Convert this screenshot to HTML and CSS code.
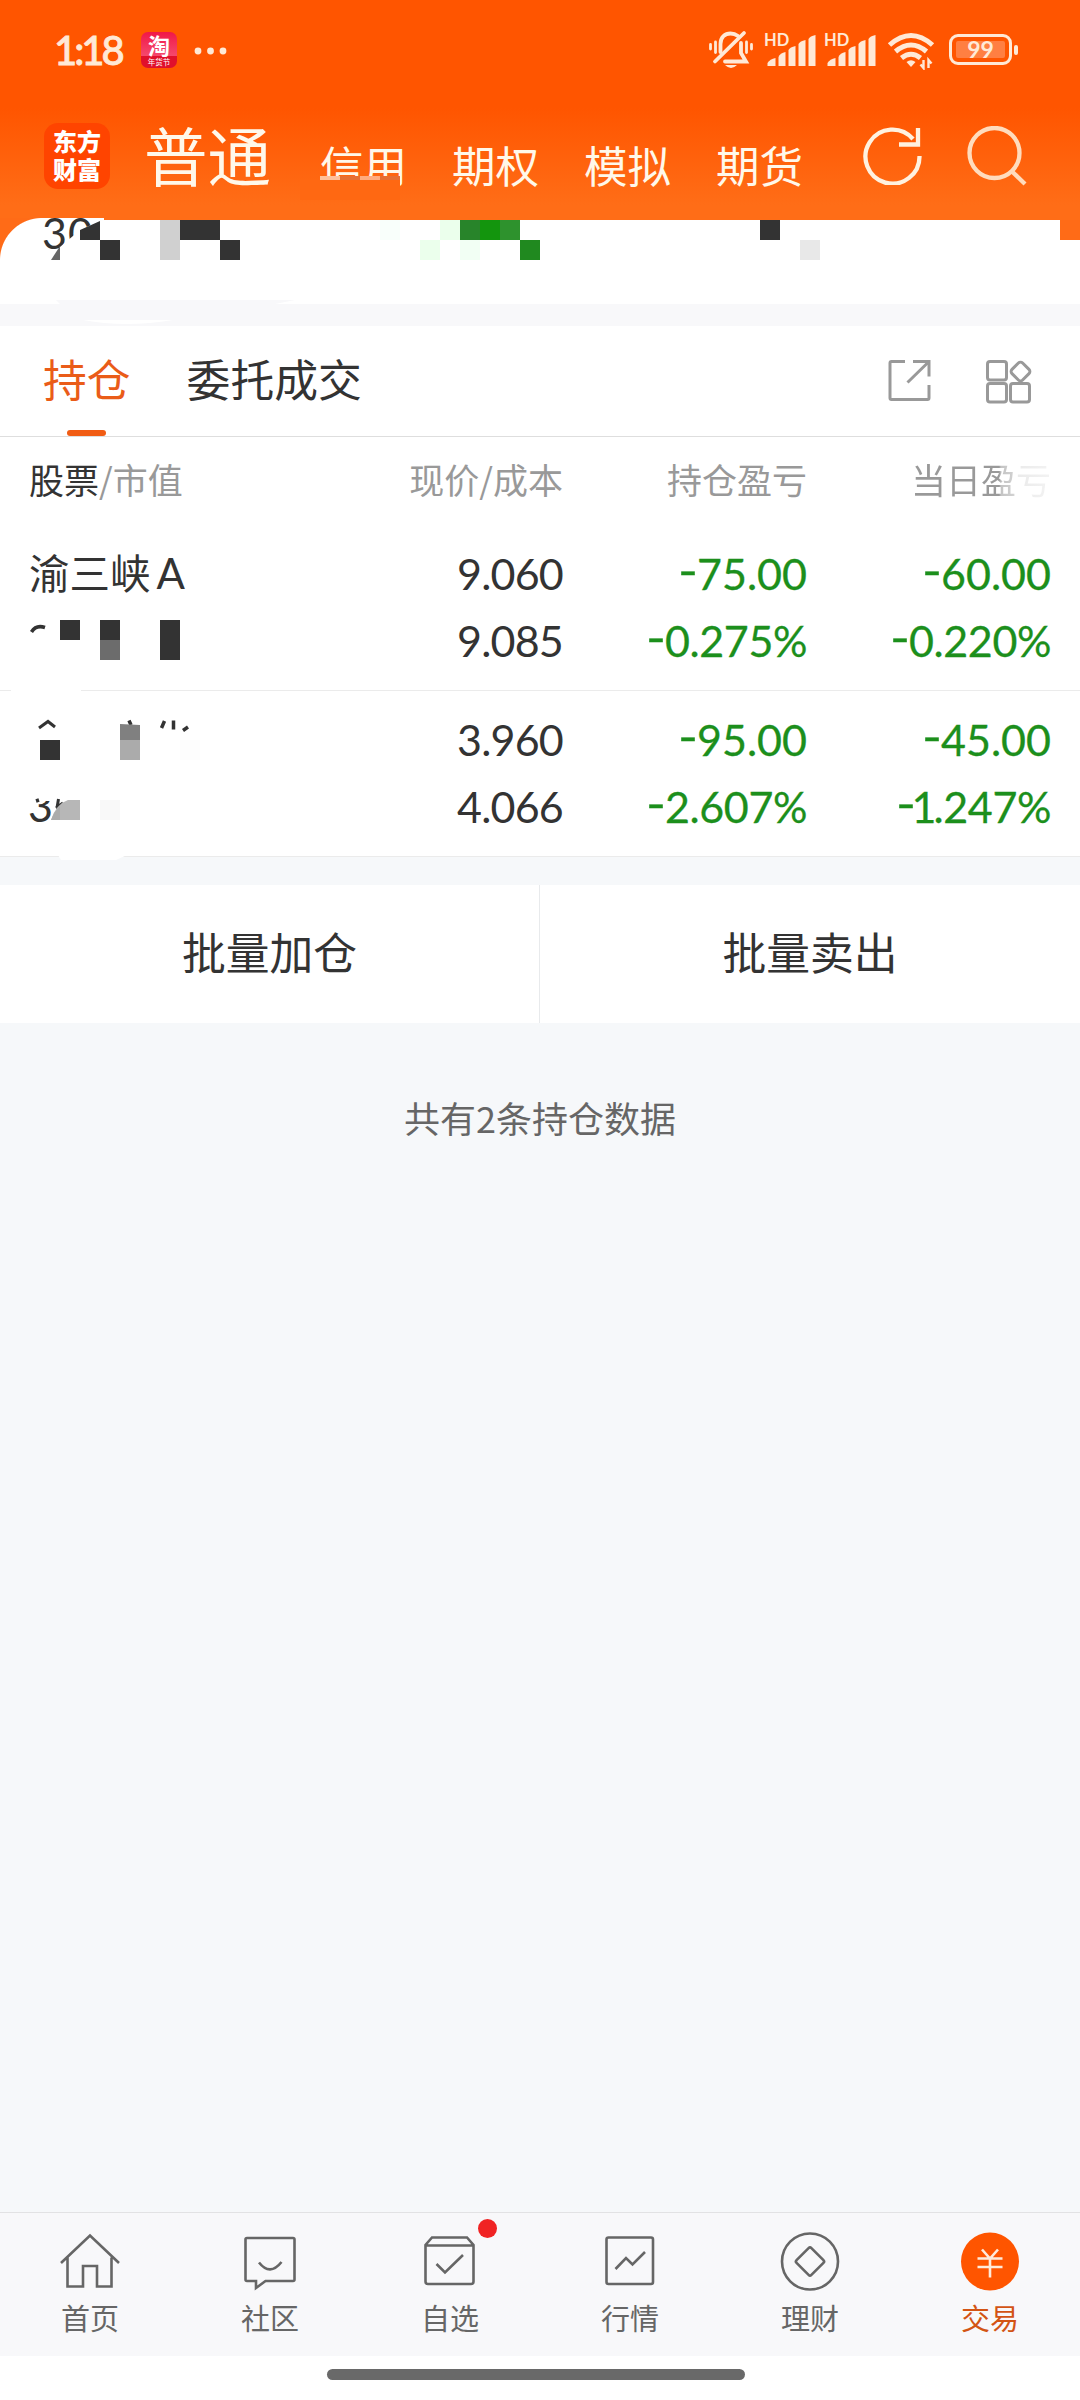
FILE: index.html
```html
<!DOCTYPE html>
<html lang="zh-CN">
<head>
<meta charset="utf-8">
<title>交易 - 持仓</title>
<link rel="stylesheet" href="styles.css">
</head>
<body>
<div class="app">
  <header class="header">
    <div class="status">
      <span class="time">1:18</span>
      <span class="taobao"><b>淘</b><i>年货节</i></span>
      <svg class="more" width="34" height="8" viewBox="0 0 34 8" fill="#ffe9d6"><circle cx="4" cy="4" r="3.4"/><circle cx="16.500" cy="4" r="3.4"/><circle cx="29" cy="4" r="3.4"/></svg>
      <div class="status-icons">
        <svg width="46" height="40" viewBox="0 0 46 40" fill="none" stroke="#ffe9d6" stroke-width="3.8" stroke-linecap="round">
          <path d="M12.500 22V14C12.500 7 17 3.500 22.500 3.500C26 3.500 28 4.500 30 6"/>
          <path d="M33 13V23L38 31.500H17M36 3L7 31.500"/>
          <path d="M2.500 14.500V19M7.500 12V22.500M38.500 12V22.500M43.500 14.500V19" stroke-width="2.800"/>
          <path d="M17 35H29Q23 41 17 35Z" fill="#ffe9d6" stroke="none"/>
        </svg>
        <span class="signal"><em>HD</em><svg width="50" height="32" viewBox="0 0 50 32" fill="#ffe9d6"><path d="M1.500 31V28Q4 24 9.500 23V31Z"/><path d="M12.500 31V22Q14 18 19.500 17V31Z"/><path d="M22.500 31V15Q24 12 29.500 11V31Z"/><path d="M32.500 31V9Q34 6 39.500 5V31Z"/><path d="M42.500 31V4Q44 1 49.500 0V31Z"/></svg></span>
        <span class="signal"><em>HD</em><svg width="50" height="32" viewBox="0 0 50 32" fill="#ffe9d6"><path d="M1.500 31V28Q4 24 9.500 23V31Z"/><path d="M12.500 31V22Q14 18 19.500 17V31Z"/><path d="M22.500 31V15Q24 12 29.500 11V31Z"/><path d="M32.500 31V9Q34 6 39.500 5V31Z"/><path d="M42.500 31V4Q44 1 49.500 0V31Z"/></svg></span>
        <svg class="wifi" width="48" height="38" viewBox="0 0 48 38" fill="none" stroke="#ffe9d6" stroke-width="5">
          <path d="M2.500 13Q24 -6 45.500 13M8.500 19.500Q24 6.500 39.500 19.500M14.500 26Q24 18.500 33.500 26"/>
          <path d="M19.500 30Q24 26.500 28.500 30L24 35Z" fill="#ffe9d6" stroke="none"/>
          <path d="M36.500 28V36L33.500 32.500M41.500 36V28L44.500 31.500" stroke-width="2.400"/>
        </svg>
        <span class="battery">99</span>
      </div>
    </div>
    <nav class="accounts">
      <span class="logo">东方<br>财富</span>
      <span class="account account-on">普通</span>
      <span class="account">信用</span>
      <span class="account">期权</span>
      <span class="account">模拟</span>
      <span class="account">期货</span>
      <svg class="refresh" width="60" height="60" viewBox="0 0 60 60" fill="none" stroke="#fff1df" stroke-width="4.300"><path d="M57.500 31A27 27 0 1 1 51 14"/><path d="M56 3V19.500H37"/></svg>
      <svg width="60" height="60" viewBox="0 0 60 60" fill="none" stroke="#ffdcbd" stroke-width="4.300"><circle cx="27.500" cy="27" r="25"/><path d="M44 44.500L58 58"/></svg>
    </nav>
    <svg class="smudge" width="100" height="24" viewBox="0 0 100 24"><path d="M0 4H100V24H0Z" fill="#ff6812"/><path d="M20 0H40V4H20Z" fill="#ffc09a"/><path d="M40 0H60V4H40Z" fill="#e66f33"/><path d="M60 0H80V4H60Z" fill="#ffac80"/><path d="M80 0H100V4H80Z" fill="#e66f33"/></svg>
  </header>

  <section class="summary">
    <svg class="mosaic" width="1080" height="110" viewBox="0 218 1080 110">
      <path d="M1060 218H1080V240H1060Z" fill="#ff6b17"/>
      <text x="42" y="249" class="digits">3</text><text x="68" y="249" class="digits">0</text>
      <path d="M60 247L80 230V250H60Z" fill="#fff"/><path d="M80 230L100 221V250H80Z" fill="#fff"/>
      <path d="M80 230L100 221V240H80ZM100 240H120V260H100ZM180 220H220V240H180ZM220 240H240V260H220ZM760 220H780V240H760Z" fill="#333"/>
      <path d="M60 246V260H51Z" fill="#666"/>
      <path d="M160 220H180V260H160Z" fill="#d0d0d0"/>
      <path d="M380 220H400V240H380Z" fill="#f9fffb"/>
      <path d="M440 220H460V240H440ZM420 240H440V260H420Z" fill="#ebffec"/>
      <path d="M460 220H480V240H460Z" fill="#28842a"/><path d="M480 220H500V240H480Z" fill="#13950d"/><path d="M500 220H520V240H500Z" fill="#2e922d"/>
      <path d="M460 240H480V260H460Z" fill="#f2fff4"/><path d="M520 240H540V260H520Z" fill="#20891f"/>
      <path d="M800 240H820V260H800Z" fill="#e8e8e8"/>
      <path d="M56 300H295L275 304H60Z" fill="#f8f8fa"/>
      <path d="M83 320H173Q125 328 83 320Z" fill="#fff"/>
    </svg>
  </section>

  <section class="positions">
    <div class="tabs">
      <span class="tab tab-on">持仓</span>
      <span class="tab">委托成交</span>
      <svg class="export" width="44" height="44" viewBox="0 0 44 44" fill="none" stroke="#999" stroke-width="3"><path d="M18 3.500H4.500Q3 3.500 3 5V40Q3 41.500 4.500 41.500H40.500Q42 41.500 42 40V27M26 3.500H42V18.500M41.500 4L20.500 24.500"/></svg>
      <svg width="48" height="48" viewBox="0 0 48 48" fill="none" stroke="#999" stroke-width="3"><rect x="3.500" y="4.500" width="19" height="18.500" rx="2.500"/><rect x="3.500" y="26.500" width="19" height="18.500" rx="2.500"/><rect x="26.500" y="26.500" width="19" height="18.500" rx="2.500"/><rect x="29" y="7" width="15" height="15" rx="3" transform="rotate(45 36.500 14.500)"/></svg>
    </div>
    <div class="row head">
      <span><b>股票</b>/市值</span><span>现价/成本</span><span>持仓盈亏</span><span class="fade">当日盈亏</span>
    </div>
    <div class="row holding">
      <span class="name">渝三峡<i>A</i></span><span class="price">9.060</span><span class="down"><u>-</u>75.00</span><span class="down"><u>-</u>60.00</span>
      <span></span><span class="price">9.085</span><span class="down pct"><u>-</u>0.275%</span><span class="down pct"><u>-</u>0.220%</span>
    </div>
    <div class="row holding">
      <span></span><span class="price">3.960</span><span class="down"><u>-</u>95.00</span><span class="down"><u>-</u>45.00</span>
      <span></span><span class="price">4.066</span><span class="down pct"><u>-</u>2.607%</span><span class="down pct"><u>-</u><s>1</s>.247%</span>
    </div>
    <svg class="masks" width="240" height="290" viewBox="0 580 240 290">
      <path d="M60 620H80V640H60ZM100 620H120V640H100ZM160 620H180V660H160ZM40 740H60V760H40Z" fill="#333"/>
      <path d="M100 640H120V660H100Z" fill="#6c6c6c"/>
      <path d="M31.500 632Q36 624.500 45 627.500" fill="none" stroke="#333" stroke-width="3.500"/>
      <path d="M11 688H81V692H11Z" fill="#fff"/>
      <path d="M39 728L48 721.500L55 727" fill="none" stroke="#333" stroke-width="3"/>
      <path d="M129 720.500L131 725M164.500 721L161.500 728M173.500 720.500V729.500M188 727L183 730.500" fill="none" stroke="#333" stroke-width="3.500"/>
      <path d="M120 724L140 725V740H120Z" fill="#808080"/><path d="M120 740H140V760H120Z" fill="#ababab"/>
      <path d="M180 740H200V760H180Z" fill="#fdfdfd"/>
      <text x="28" y="822" class="digits">3</text>
      <path d="M24 786H60V801H24Z" fill="#fff"/>
      <path d="M36 801L39 800" stroke="#333" stroke-width="3.500"/>
      <path d="M58.500 799L57 808M56 808L63 803" stroke="#333" stroke-width="3"/>
      <path d="M51 820Q56 804 68 800H80V820Z" fill="#b7b7b7"/><path d="M51 820Q54 812 60 806V820Z" fill="#ababab"/>
      <path d="M100 800H120V820H100Z" fill="#f9f9f9"/>
      <path d="M58 855H127L116 860H61Z" fill="#fff"/>
    </svg>
  </section>

  <section class="actions"><span>批量加仓</span><span>批量卖出</span></section>
  <p class="notice">共有2条持仓数据</p>

  <nav class="bottom">
    <span class="item"><svg width="64" height="64" viewBox="0 0 64 64"><path d="M3 33L32 5.500L61 33M9.500 27.500V56.500H25V36H39V56.500H53.500V27.500"/></svg>首页</span>
    <span class="item"><svg width="64" height="64" viewBox="0 0 64 64"><path d="M9 8H55Q56.500 8 56.500 9.500V49.500Q56.500 51 55 51H27.500L18 58V51H9Q7.500 51 7.500 49.500V9.500Q7.500 8 9 8ZM21 32.500Q32 46.500 43.500 32"/></svg>社区</span>
    <span class="item"><svg width="64" height="64" viewBox="0 0 64 64"><path d="M7.500 15V51.500Q7.500 54 10 54H53Q55.500 54 55.500 51.500V15L49 7.500H14ZM7.500 15.500H55.500M18.500 34L27 42.500L45 25"/></svg><i class="dot"></i>自选</span>
    <span class="item"><svg width="64" height="64" viewBox="0 0 64 64"><rect x="8.500" y="7.500" width="46.500" height="46.500" rx="2"/><path d="M17.500 39L28 28L34.500 34.500L47 22"/></svg>行情</span>
    <span class="item"><svg width="64" height="64" viewBox="0 0 64 64"><circle cx="32" cy="31.500" r="28"/><rect x="21.500" y="21" width="21" height="21" rx="2" transform="rotate(45 32 31.500)"/></svg>理财</span>
    <span class="item item-on"><svg width="64" height="64" viewBox="0 0 64 64"><circle cx="32" cy="31.500" r="29" fill="#f50" stroke="none"/><path d="M24 19.500L32 28.500L40 19.500M32 28.500V47.500M19.500 28.500H44.500M19.500 37H44.500" stroke="#ffeada"/></svg>交易</span>
  </nav>
  <div class="gesture"><i></i></div>
</div>
</body>
</html>
```
FILE: styles.css
```css
* { box-sizing: border-box; }
body { margin: 0; background: #f6f8fa; font-family: "Noto Sans CJK SC", sans-serif; color: #333; }
i, em, u, s { font-style: normal; text-decoration: none; }
svg { display: block; flex: none; }
.app { width: 1080px; height: 2400px; display: flex; flex-direction: column; overflow: hidden; }

.header { position: relative; flex: none; height: 218px; background: linear-gradient(#f50 0, #f50 108px, #ff6d17 205px, #ff6d17); }
.status { display: flex; height: 100px; padding: 0 62px 0 54px; align-items: center; }
.time { width: 87px; font: 500 40px/100px Lato, sans-serif; letter-spacing: -3px; color: #ffe9d6; -webkit-text-stroke: 0.800px #ffe9d6; }
.taobao { width: 36px; height: 36px; border-radius: 7px; background: linear-gradient(#f01848 0, #f5486c 66%, #e0102c 67%); display: flex; flex-direction: column; align-items: center; color: #fff; overflow: hidden; }
.taobao b { font-size: 22px; line-height: 24px; font-weight: 700; }
.taobao i { font-size: 7.500px; line-height: 11px; }
.more { margin-left: 17px; margin-top: 1px; }
.status-icons { margin-left: auto; display: flex; height: 40px; }
.signal { display: block; position: relative; width: 50px; height: 40px; margin-left: 12px; padding-top: 5px; }
.signal + .signal { margin-left: 10px; }
.signal em { position: absolute; left: -2px; top: 2px; font: 700 16.500px/16px Lato, sans-serif; color: #ffe9d6; }
.wifi { margin: 2px 0 0 11px; }
.battery { position: relative; width: 63px; height: 31px; margin: 4px 6px 0 14px; border: 3px solid #ffe9d6; border-radius: 9px; font: 700 23px/25px Lato, sans-serif; text-align: center; color: #ffe9d6; background: #ff7f42 content-box; padding: 0; box-shadow: inset 0 0 0 4px #f50; }
.battery::after { content: ""; position: absolute; right: -9px; top: 8px; width: 4px; height: 10px; border-radius: 2px; background: #ffe9d6; }

.accounts { display: flex; height: 118px; padding-left: 44px; align-items: flex-start; color: #fff8ea; }
.logo { width: 66px; height: 66px; margin-top: 23px; padding-top: 4px; border-radius: 14px; background: #ff4400; font-size: 24px; font-weight: 900; line-height: 28px; text-align: center; color: #fff; }
.account { font-size: 43.500px; line-height: 64px; margin: 32.500px 0 0 44px; width: 88px; white-space: nowrap; }
.account-on { font-size: 63.500px; line-height: 90px; width: 130px; margin: 8px 0 0 34px; }
.account-on + .account { margin-left: 46px; }
.accounts > svg { margin-top: 26px; }
.accounts > svg + svg { margin-left: 45px; }
.accounts > .refresh { margin-left: 58px; margin-top: 25px; }
.smudge { position: absolute; left: 300px; top: 176px; }

.summary { position: relative; flex: none; height: 108px; background: linear-gradient(#fff 86px, #f8f8fa 86px); }
.summary::before { content: ""; position: absolute; left: 0; top: 0; width: 42px; height: 42px; background: radial-gradient(circle at 42px 42px, #fff 41.500px, #ff6b17 42.500px); }
.summary::after { content: ""; position: absolute; left: 104px; top: 0; right: 0; height: 2px; background: #ff6d17; }
.mosaic { position: absolute; left: 0; top: 0; }
.digits { font: 43px Lato, sans-serif; fill: #333; }

.positions { position: relative; flex: none; height: 531px; background: #fff; }
.tabs { display: flex; height: 111px; border-bottom: 1px solid #dedede; padding-left: 43px; align-items: flex-start; }
.tab { position: relative; font-size: 43.800px; line-height: 64px; margin: 20px 56px 0 0; height: 64px; }
.tab-on { color: #ea5c18; }
.tab-on::after { content: ""; position: absolute; left: 24px; top: 84px; width: 39px; height: 6px; border-radius: 3px; background: #f15c14; }
.export { margin: 32px 53px 0 auto; }
.export + svg { margin: 31px 48px 0 0; }

.row { display: grid; grid-template-columns: 300px 234px 244px 244px; padding-left: 29px; }
.row > span { text-align: right; white-space: nowrap; }
.row > span:nth-child(4n+1) { text-align: left; }
.head { height: 87px; font-size: 35px; line-height: 84px; color: #999; }
.head b { font-weight: 400; color: #333; }
.head .fade { background: linear-gradient(90deg, #999 0, #999 192px, #c4c4c4 194px, #d0d0d0 206px, #eaeaea 210px, #f2f2f2 240px); -webkit-background-clip: text; background-clip: text; color: transparent; }
.holding { height: 167px; padding-top: 16px; border-bottom: 1px solid #ebebeb; font: 43px/67px Lato, sans-serif; grid-auto-rows: 67px; }
.holding + .holding { height: 166px; padding-top: 15px; }
.price { letter-spacing: -0.800px; }
.name { font: 40.500px/63px "Noto Sans CJK SC", sans-serif; }
.name i { font: 42px/63px Lato, sans-serif; margin-left: 6px; }
.down { color: #1c8f1c; -webkit-text-stroke: 0.300px #1c8f1c; }
.down u { display: inline-block; position: relative; top: -4px; transform: scaleX(1.25); margin: 0 1px 0 2px; }
.down s { display: inline-block; width: 20px; margin-right: -1px; text-indent: -3px; }
.pct { letter-spacing: -0.400px; }
.masks { position: absolute; left: 0; top: 254px; }

.actions { flex: none; margin-top: 28px; height: 138px; background: #fff; display: flex; }
.actions span { width: 539px; text-align: center; font-size: 43.800px; line-height: 132px; }
.actions span + span { width: 541px; border-left: 1px solid #e8eaec; }
.notice { margin: 69px 0 0; text-align: center; font-size: 36px; line-height: 50px; color: #666; }

.bottom { margin-top: auto; flex: none; height: 144px; border-top: 1px solid #e2e2e4; background: #f8f8fa; display: flex; padding-top: 17px; color: #666; }
.item { position: relative; flex: 1; display: flex; flex-direction: column; align-items: center; font-size: 29px; line-height: 44px; }
.item svg { fill: none; stroke: #666; stroke-width: 2.600; margin-bottom: 1px; }
.item-on { color: #d35414; }
.dot { position: absolute; left: 117.500px; top: -11px; width: 19px; height: 19px; border-radius: 50%; background: #f02323; }
.gesture { flex: none; height: 44px; background: #fff; padding: 13px 0 0 327px; }
.gesture i { display: block; width: 418px; height: 11px; border-radius: 6px; background: #696969; }
```
